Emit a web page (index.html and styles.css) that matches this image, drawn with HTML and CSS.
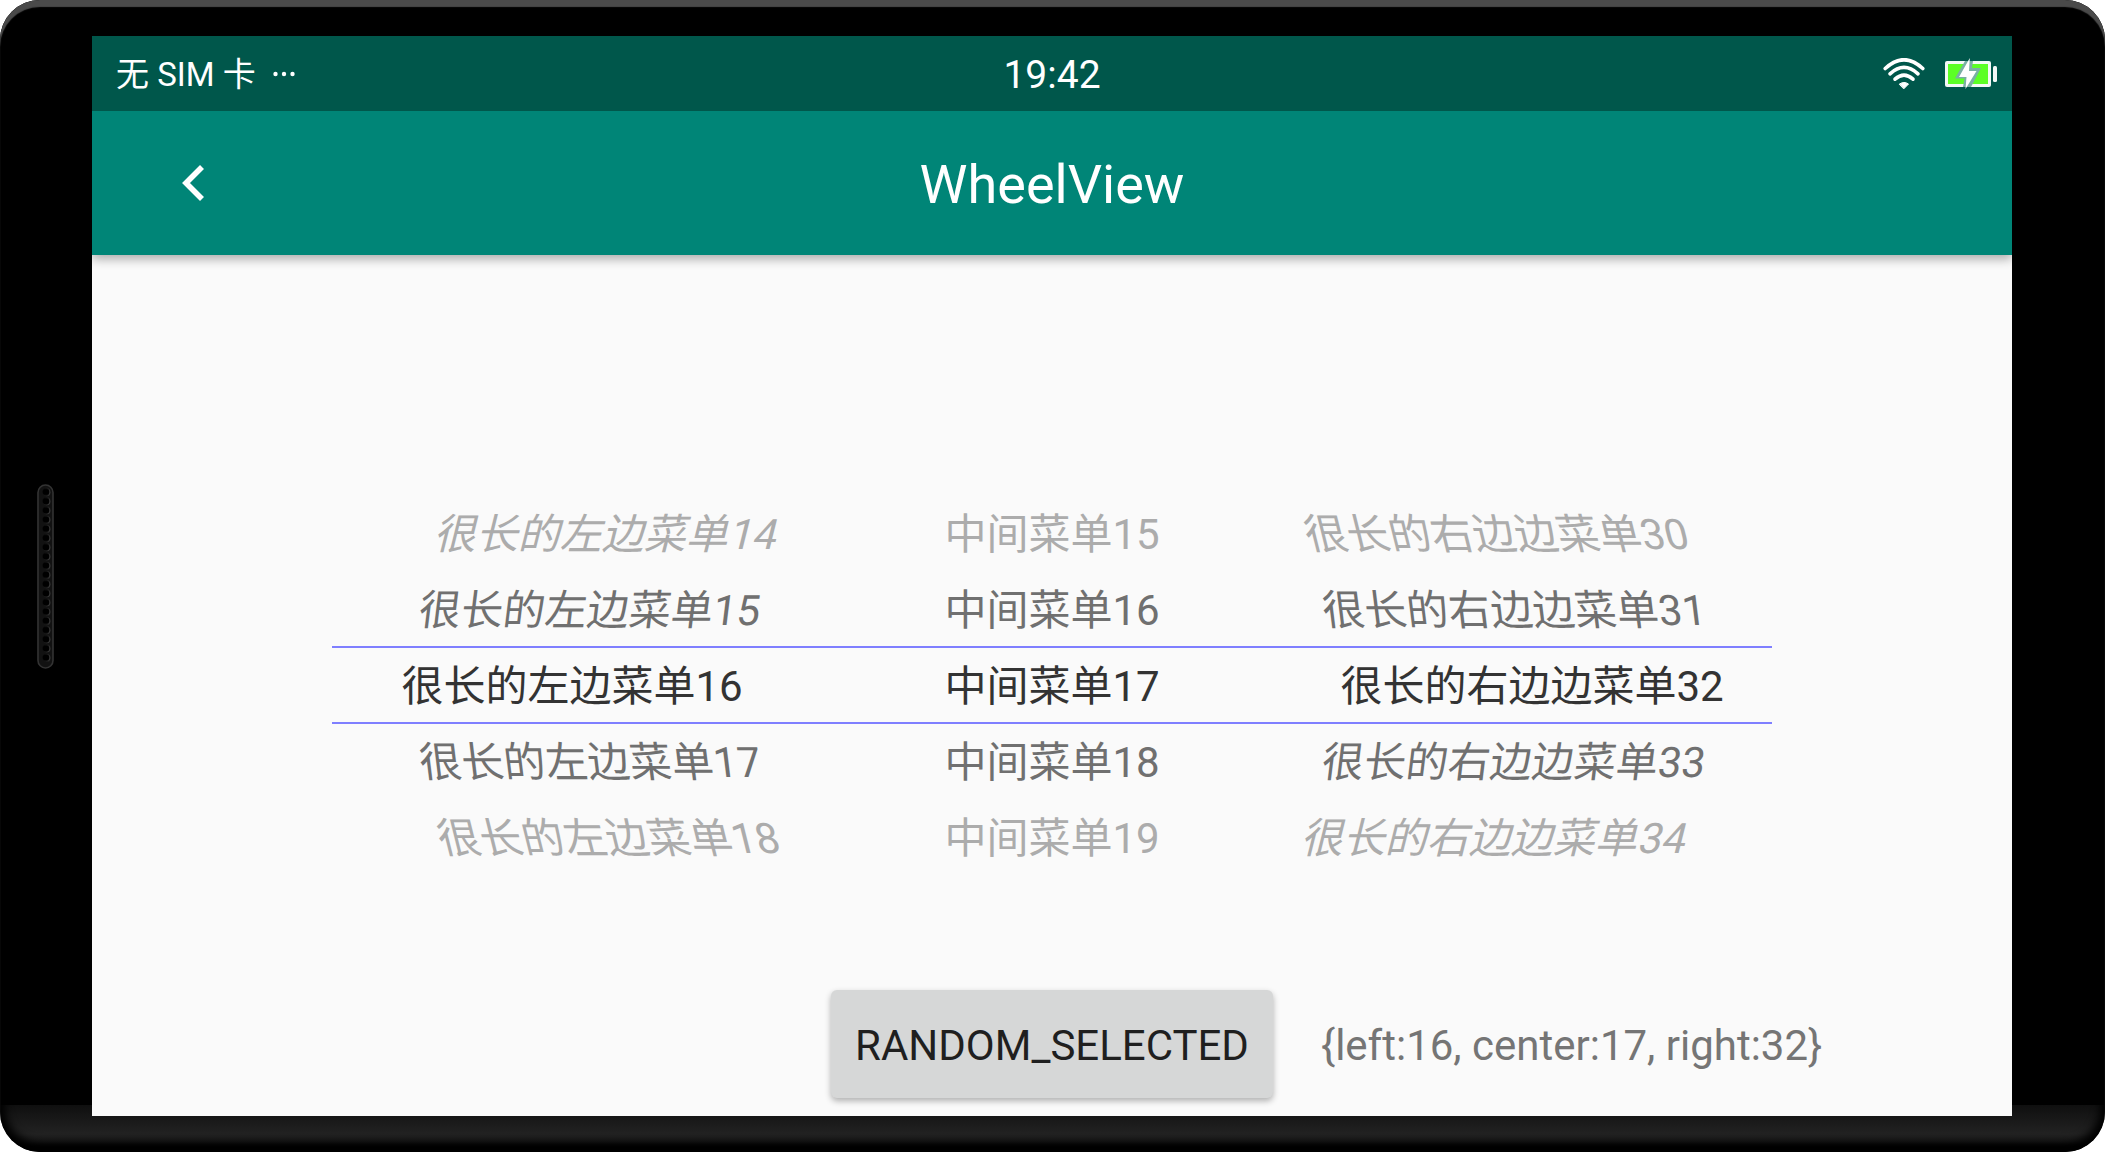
FILE: index.html
```html
<!DOCTYPE html>
<html lang="zh-CN">
<head>
<meta charset="utf-8">
<title>WheelView</title>
<link rel="stylesheet" href="styles.css">
</head>
<body>
<div class="device">
  <svg class="speaker" width="17" height="185" viewBox="0 0 17 185" aria-hidden="true">
    <defs>
      <pattern id="holes" x="0" y="3.4" width="17" height="9.2" patternUnits="userSpaceOnUse">
        <circle cx="9.8" cy="4.8" r="3.6" fill="#3c3c3c"/>
        <circle cx="9" cy="4.6" r="3.4" fill="#000"/>
      </pattern>
    </defs>
    <rect x="1" y="1" width="15" height="183" rx="7.5" fill="#121212" stroke="#333" stroke-width="1.6"/>
    <rect x="3" y="3.4" width="12" height="174.8" fill="url(#holes)"/>
  </svg>
  <div class="screen">
    <div class="status-bar">
      <div class="carrier">
        <span class="carrier-name">无 SIM 卡</span>
        <svg width="22" height="6" viewBox="0 0 22 6" fill="#fff" aria-hidden="true"><circle cx="2.5" cy="3" r="2.2"/><circle cx="11" cy="3" r="2.2"/><circle cx="19.500" cy="3" r="2.2"/></svg>
      </div>
      <time class="clock">19:42</time>
      <div class="status-icons">
        <svg width="42" height="32" viewBox="0 0 42 32" fill="none" stroke="#fff" stroke-width="3.6" stroke-linecap="round" aria-label="Wi-Fi" role="img">
          <path d="M2.200 10.500 Q21 -7 39.800 10.500"/>
          <path d="M7 15.800 Q21 3 35 15.800"/>
          <path d="M12 21.200 Q21 13 30 21.200"/>
          <path d="M16.500 26 Q21 22.800 25.500 26 L21 30.600Z" fill="#fff" stroke-width="1"/>
        </svg>
        <svg width="52" height="32" viewBox="0 0 52 32" aria-label="Charging" role="img">
          <rect x="0" y="3" width="46" height="26" rx="2" fill="#f4f8f7"/>
          <rect x="3" y="6" width="40" height="20" fill="#5cff26"/>
          <rect x="48" y="8" width="4" height="16" rx="1.500" fill="#f4f8f7"/>
          <path d="M20 3 H28 L27 10 H36 L26 29 H18 L19.500 20.500 H10Z" fill="#7ab0a4"/>
          <path d="M24.800 0 L14 19 H21.500 L20.500 31 L31.500 13 H24Z" fill="#fff"/>
        </svg>
      </div>
    </div>
    <header class="toolbar">
      <button class="back" type="button" aria-label="Back">
        <svg width="22" height="36" viewBox="0 0 22 36" fill="none" stroke="#fff" stroke-width="5.600"><path d="M20 2 L4 18 L20 34"/></svg>
      </button>
      <h1 class="title">WheelView</h1>
    </header>
    <main class="content">
      <div class="wheels">
        <ul class="wheel wheel-left">
          <li class="far above">很长的左边菜单14</li>
          <li class="near above">很长的左边菜单15</li>
          <li class="selected">很长的左边菜单16</li>
          <li class="near below">很长的左边菜单17</li>
          <li class="far below">很长的左边菜单18</li>
        </ul>
        <ul class="wheel">
          <li class="far">中间菜单15</li>
          <li class="near">中间菜单16</li>
          <li class="selected">中间菜单17</li>
          <li class="near">中间菜单18</li>
          <li class="far">中间菜单19</li>
        </ul>
        <ul class="wheel wheel-right">
          <li class="far above">很长的右边边菜单30</li>
          <li class="near above">很长的右边边菜单31</li>
          <li class="selected">很长的右边边菜单32</li>
          <li class="near below">很长的右边边菜单33</li>
          <li class="far below">很长的右边边菜单34</li>
        </ul>
      </div>
      <div class="actions">
        <button class="random" type="button">RANDOM_SELECTED</button>
        <output class="result">{left:16, center:17, right:32}</output>
      </div>
    </main>
  </div>
</div>
</body>
</html>
```
FILE: styles.css
```css
* {
  box-sizing: border-box;
}

body {
  margin: 0;
  background: #fff;
  font-family: Roboto, "Noto Sans CJK SC", sans-serif;
}

.device {
  display: grid;
  grid-template-columns: 92px 1fr 93px;
  min-height: 100vh;
  padding: 36px 0;
  border-radius: 40px;
  background: linear-gradient(to top, #000 4px, #1a1a1a 10px, #222 18px, #0f0f0f 47px, #000 47px);
  box-shadow: inset 0 7px 1px #4a4a4a, inset 0 -4px 8px 5px #000;
}

.speaker {
  align-self: center;
  margin-left: 37px;
}

.screen {
  grid-column: 2;
  display: flex;
  flex-direction: column;
  background: #fafafa;
}

.status-bar {
  display: grid;
  grid-template-columns: 1fr auto 1fr;
  align-items: center;
  height: 75px;
  padding: 0 15px;
  background: #00574b;
  color: #fff;
}

.carrier {
  display: flex;
  align-items: center;
  gap: 17px;
  padding-left: 9px;
  font-size: 33px;
}

.carrier-name {
  padding-bottom: 3px;
}

.clock {
  padding-top: 3px;
  font-size: 39px;
}

.status-icons {
  display: flex;
  justify-content: flex-end;
  gap: 20px;
}

.toolbar {
  display: grid;
  grid-template-columns: 1fr auto 1fr;
  align-items: center;
  height: 144px;
  background: #008577;
  color: #fff;
  box-shadow: 0 4px 10px rgba(0, 0, 0, 0.32);
  clip-path: inset(0 0 -20px 0);
}

.back {
  display: flex;
  justify-self: start;
  margin: 0;
  padding: 24px 40px 24px 90px;
  border: 0;
  background: none;
}

.title {
  margin: 0;
  padding-top: 3px;
  font-size: 54px;
  font-weight: 400;
}

.content {
  flex: 1;
  display: grid;
  grid-template-rows: 1fr auto 1fr;
  justify-items: center;
}

.wheels {
  grid-row: 2;
  display: grid;
  grid-template-columns: repeat(3, 1fr);
  width: 75%;
  padding-bottom: 2px;
}

.wheel {
  margin: 0;
  padding: 0;
  list-style: none;
  color: #333;
  font-size: 42px;
  line-height: 72px;
  text-align: center;
  white-space: nowrap;
}

.wheel li {
  padding-top: 4px;
}

.wheel .selected {
  box-shadow: 0 -1px #7f7fff, 0 1px #7f7fff, inset 0 1px #7f7fff, inset 0 -1px #7f7fff;
}

.near {
  color: #707070;
}

.far {
  color: #acacac;
}

.wheel-left .near {
  padding-left: 36px;
}

.wheel-left .far {
  padding-left: 72px;
}

.wheel-right .near {
  padding-right: 36px;
}

.wheel-right .far {
  padding-right: 72px;
}

.wheel-left .near.above,
.wheel-right .near.below {
  transform: skewX(-7deg);
}

.wheel-left .far.above,
.wheel-right .far.below {
  transform: skewX(-14deg);
}

.wheel-left .near.below,
.wheel-right .near.above {
  transform: skewX(7deg);
}

.wheel-left .far.below,
.wheel-right .far.above {
  transform: skewX(14deg);
}

.actions {
  grid-row: 3;
  align-self: end;
  display: grid;
  grid-template-columns: 1fr auto 1fr;
  align-items: center;
  column-gap: 48px;
  width: 100%;
  padding-bottom: 18px;
  font-size: 42px;
}

.random {
  grid-column: 2;
  height: 108px;
  padding: 2px 24px 0;
  border: 0;
  border-radius: 6px;
  background: #d6d7d7;
  color: #1f1f1f;
  font: inherit;
  box-shadow: 0 3px 6px rgba(0, 0, 0, 0.3);
}

.result {
  padding-top: 2px;
  color: #757575;
}
```
